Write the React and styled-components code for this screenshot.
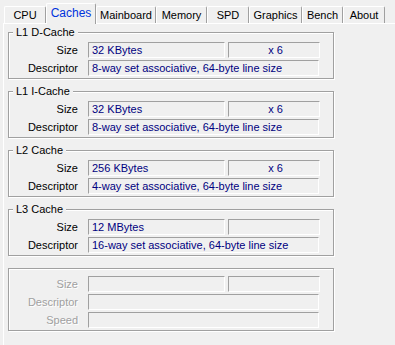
import React from "react";
import styled, { createGlobalStyle } from "styled-components";

const Global = createGlobalStyle`
  html, body { margin: 0; padding: 0; background: #f0f0f0; }
  body { font-family: "Liberation Sans", Arial, sans-serif; font-size: 11px; }
`;

const Root = styled.div`
  width: 395px;
  height: 345px;
  overflow: hidden;
  background: #f0f0f0;
  padding-left: 3px;
  box-sizing: border-box;
`;

const TabBar = styled.div`
  display: flex;
  align-items: flex-end;
  height: 23px;
  padding-left: 1px;
  position: relative;
  z-index: 2;
`;

const Tab = styled.div`
  box-sizing: border-box;
  width: ${(p) => p.$w}px;
  height: ${(p) => (p.$active ? 21 : 17)}px;
  margin-bottom: ${(p) => (p.$active ? -1 : 0)}px;
  border-top: 1px solid #fff;
  border-left: 1px solid #fff;
  border-right: 1px solid #a0a0a0;
  border-top-left-radius: 2px;
  border-top-right-radius: 2px;
  background: #f0f0f0;
  color: ${(p) => (p.$active ? "#0033dd" : "#000")};
  font-size: ${(p) => (p.$active ? 12 : 11)}px;
  display: flex;
  align-items: center;
  justify-content: center;
  padding-bottom: ${(p) => (p.$active ? 2 : 0)}px;
  white-space: nowrap;
`;

const Panel = styled.div`
  position: relative;
  z-index: 1;
  width: 400px;
  height: 330px;
  box-sizing: border-box;
  border-top: 1px solid #fff;
  border-left: 1px solid #fff;
  padding: 8px 0 0 4px;
  display: flex;
  flex-direction: column;
  gap: 12px;
`;

const Group = styled.div`
  position: relative;
  width: 326px;
  box-sizing: border-box;
  border: 1px solid #a0a0a0;
  box-shadow: inset 1px 1px 0 #fff, 1px 1px 0 #fff;
  padding: ${(p) => (p.$titled ? 9 : 7)}px 0 2px 0;
  display: flex;
  flex-direction: column;
  gap: 2px;
`;

const GroupTitle = styled.span`
  position: absolute;
  top: -8px;
  left: 4px;
  padding: 0 3px;
  background: #f0f0f0;
  color: #000;
  line-height: 14px;
`;

const Row = styled.div`
  display: flex;
  align-items: center;
  height: 16px;
`;

const Label = styled.div`
  width: 69px;
  margin-right: 10px;
  text-align: right;
  color: ${(p) => (p.$disabled ? "#a0a0a0" : "#000")};
  text-shadow: ${(p) => (p.$disabled ? "1px 1px 0 #fff" : "none")};
  white-space: nowrap;
`;

const Fields = styled.div`
  display: flex;
  gap: 3px;
`;

const Field = styled.div`
  box-sizing: border-box;
  width: ${(p) => p.$w}px;
  height: 16px;
  border-top: 1px solid #a0a0a0;
  border-left: 1px solid #a0a0a0;
  border-bottom: 1px solid #fff;
  border-right: 1px solid #fff;
  padding-left: 3px;
  line-height: 14px;
  color: #000080;
  text-align: ${(p) => (p.$center ? "center" : "left")};
  white-space: nowrap;
  overflow: hidden;
`;

const tabs = [
  ["CPU", 42],
  ["Caches", 50, true],
  ["Mainboard", 60],
  ["Memory", 51],
  ["SPD", 42],
  ["Graphics", 53],
  ["Bench", 41],
  ["About", 42],
];

const caches = [
  { title: "L1 D-Cache", size: "32 KBytes", count: "x 6", desc: "8-way set associative, 64-byte line size" },
  { title: "L1 I-Cache", size: "32 KBytes", count: "x 6", desc: "8-way set associative, 64-byte line size" },
  { title: "L2 Cache", size: "256 KBytes", count: "x 6", desc: "4-way set associative, 64-byte line size" },
  { title: "L3 Cache", size: "12 MBytes", count: "", desc: "16-way set associative, 64-byte line size" },
];

function CacheGroup({ c }) {
  return (
    <Group $titled>
      <GroupTitle>{c.title}</GroupTitle>
      <Row>
        <Label>Size</Label>
        <Fields>
          <Field $w={137}>{c.size}</Field>
          <Field $w={92} $center>{c.count}</Field>
        </Fields>
      </Row>
      <Row>
        <Label>Descriptor</Label>
        <Field $w={231}>{c.desc}</Field>
      </Row>
    </Group>
  );
}

export default function App() {
  return (
    <Root>
      <Global />
      <TabBar>
        {tabs.map(([name, w, active]) => (
          <Tab key={name} $w={w} $active={active}>
            {name}
          </Tab>
        ))}
      </TabBar>
      <Panel>
        {caches.map((c) => (
          <CacheGroup key={c.title} c={c} />
        ))}
        <Group>
          <Row>
            <Label $disabled>Size</Label>
            <Fields>
              <Field $w={137} />
              <Field $w={92} />
            </Fields>
          </Row>
          <Row>
            <Label $disabled>Descriptor</Label>
            <Field $w={231} />
          </Row>
          <Row>
            <Label $disabled>Speed</Label>
            <Field $w={231} />
          </Row>
        </Group>
      </Panel>
    </Root>
  );
}
